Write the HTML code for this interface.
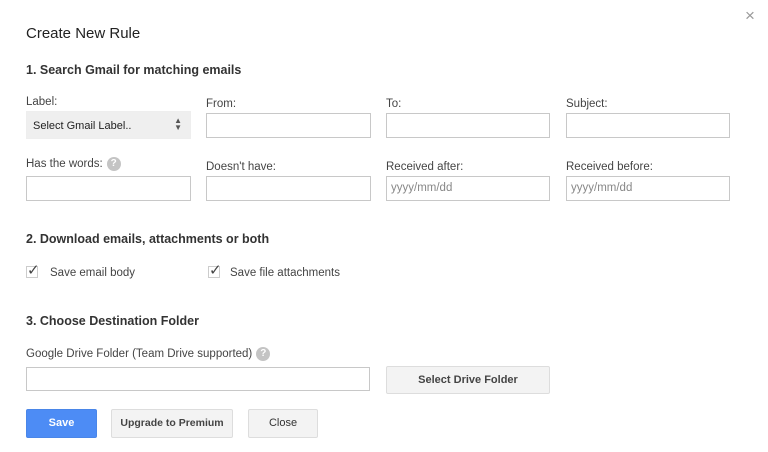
<!DOCTYPE html>
<html><head><style>
body{margin:0;width:768px;height:452px;background:#fff;font-family:"Liberation Sans",Arial,sans-serif;color:#333;position:relative;overflow:hidden}
.a{position:absolute;white-space:nowrap}
.t{font-size:15px;color:#222}
.h{font-size:12.5px;font-weight:bold;color:#333}
.l{font-size:11.5px;color:#444}
.i{position:absolute;border:1px solid #c8c8c8;background:#fff;box-sizing:border-box}
.ph{font-size:11.5px;color:#888;padding:5px 0 0 4px}
.b{position:absolute;box-sizing:border-box;border:1px solid #ddd;background:#f3f3f3;font-size:11px;font-weight:bold;color:#444;text-align:center;border-radius:2px}
.q{display:inline-block;width:14px;height:14px;border-radius:50%;background:#c4c4c4;color:#fff;font-size:10px;font-weight:bold;text-align:center;line-height:14px;vertical-align:middle;margin-left:4px}
.ck{position:absolute;width:12px;height:12px;border:1px solid #ccc;box-sizing:border-box;background:#fff}
.cm{position:absolute;font-size:15px;color:#444;line-height:15px}
</style></head><body>
<div class="a" style="left:745px;top:6px;font-size:17px;color:#999">×</div>
<div class="a t" style="left:26px;top:25px">Create New Rule</div>
<div class="a h" style="left:26px;top:63px">1. Search Gmail for matching emails</div>

<div class="a l" style="left:26px;top:96px">Label:</div>
<div class="b" style="left:26px;top:111px;width:165px;height:28px;border-color:#eee;background:#efefef;text-align:left;padding:8px 0 0 6px;font-weight:normal;color:#222;font-size:11px;border-radius:0">Select Gmail Label..<span style="position:absolute;right:8px;top:5px;font-size:8px;line-height:7px;color:#555">▲<br>▼</span></div>
<div class="a l" style="left:206px;top:98px">From:</div>
<div class="i" style="left:206px;top:113px;width:165px;height:25px"></div>
<div class="a l" style="left:386px;top:98px">To:</div>
<div class="i" style="left:386px;top:113px;width:164px;height:25px"></div>
<div class="a l" style="left:566px;top:98px">Subject:</div>
<div class="i" style="left:566px;top:113px;width:164px;height:25px"></div>

<div class="a l" style="left:26px;top:157px">Has the words:<span class="q">?</span></div>
<div class="i" style="left:26px;top:176px;width:165px;height:25px"></div>
<div class="a l" style="left:206px;top:161px">Doesn't have:</div>
<div class="i" style="left:206px;top:176px;width:165px;height:25px"></div>
<div class="a l" style="left:386px;top:161px">Received after:</div>
<div class="i ph" style="left:386px;top:176px;width:164px;height:25px">yyyy/mm/dd</div>
<div class="a l" style="left:566px;top:161px">Received before:</div>
<div class="i ph" style="left:566px;top:176px;width:164px;height:25px">yyyy/mm/dd</div>

<div class="a h" style="left:26px;top:232px">2. Download emails, attachments or both</div>
<div class="ck" style="left:26px;top:266px"></div><div class="cm" style="left:27px;top:263px">✓</div>
<div class="a l" style="left:50px;top:267px">Save email body</div>
<div class="ck" style="left:208px;top:266px"></div><div class="cm" style="left:209px;top:263px">✓</div>
<div class="a l" style="left:230px;top:267px">Save file attachments</div>

<div class="a h" style="left:26px;top:314px">3. Choose Destination Folder</div>
<div class="a l" style="left:26px;top:347px">Google Drive Folder (Team Drive supported)<span class="q">?</span></div>
<div class="i" style="left:26px;top:367px;width:344px;height:24px"></div>
<div class="b" style="left:386px;top:366px;width:164px;height:28px;line-height:26px">Select Drive Folder</div>

<div class="b" style="left:26px;top:409px;width:71px;height:29px;line-height:27px;background:#4d8cf5;border-color:#4a86e8;color:#fff">Save</div>
<div class="b" style="left:111px;top:409px;width:122px;height:29px;line-height:27px;font-size:10.5px">Upgrade to Premium</div>
<div class="b" style="left:248px;top:409px;width:70px;height:29px;line-height:27px;font-weight:normal;color:#333">Close</div>
</body></html>
